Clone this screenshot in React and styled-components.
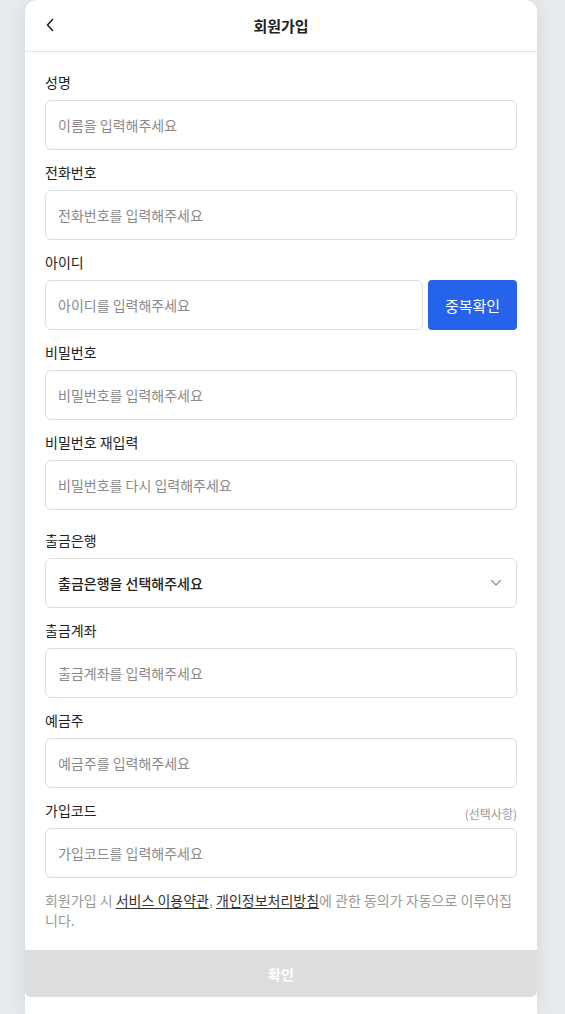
import styled, { createGlobalStyle } from "styled-components";

const GlobalStyle = createGlobalStyle`
  * { box-sizing: border-box; }
  body {
    margin: 0;
    background: #e9ecef;
    font-family: "Noto Sans CJK KR", "Noto Sans", sans-serif;
    color: #222;
  }
`;

const Card = styled.div`
  width: 512px;
  min-height: 1014px;
  margin-left: 25px;
  background: #fff;
  border-radius: 12px 12px 0 0;
  box-shadow: 0 0 24px rgba(0, 0, 0, 0.09);
  display: flex;
  flex-direction: column;
`;

const Header = styled.header`
  height: 52px;
  border-bottom: 1px solid #e3e3e3;
  display: flex;
  align-items: center;
  justify-content: center;
  position: relative;
`;

const BackButton = styled.button`
  position: absolute;
  left: 13px;
  top: 13px;
  width: 24px;
  height: 24px;
  padding: 0;
  border: 0;
  background: none;
  display: flex;
  align-items: center;
  justify-content: center;
`;

const Title = styled.h1`
  margin: 0;
  font-size: 15px;
  font-weight: 700;
  color: #222;
`;

const Form = styled.form`
  padding: 20px 20px 0;
  display: flex;
  flex-direction: column;
`;

const Field = styled.div`
  display: flex;
  flex-direction: column;
  gap: 8px;
  margin-top: ${(p) => (p.$spaced ? "8px" : "0")};
  margin-bottom: 12px;
`;

const LabelRow = styled.div`
  display: flex;
  justify-content: space-between;
  align-items: center;
  height: 20px;
`;

const Label = styled.label`
  font-size: 14px;
  font-weight: 400;
  line-height: 20px;
  color: #222;
`;

const Optional = styled.span`
  font-size: 12px;
  color: #999;
  margin-top: 6px;
`;

const Input = styled.input`
  width: 100%;
  height: 50px;
  border: 1px solid #dcdcdc;
  border-radius: 6px;
  padding: 0 12px;
  font-family: inherit;
  font-size: 14px;
  color: #222;
  outline: none;
  &::placeholder {
    color: #8a8a8a;
  }
`;

const Row = styled.div`
  display: flex;
  gap: 5px;
`;

const CheckButton = styled.button`
  flex: 0 0 89px;
  height: 50px;
  border: 0;
  border-radius: 4px;
  background: #2563eb;
  color: #fff;
  font-family: inherit;
  font-size: 15px;
  font-weight: 400;
`;

const Select = styled.div`
  height: 50px;
  border: 1px solid #dcdcdc;
  border-radius: 6px;
  padding: 0 14px 0 12px;
  display: flex;
  align-items: center;
  justify-content: space-between;
  font-size: 14px;
  font-weight: 500;
  color: #222;
`;

const Notice = styled.p`
  margin: 0;
  font-size: 14px;
  line-height: 20px;
  color: #999;
`;

const NoticeLink = styled.a`
  color: #333;
  text-decoration: underline;
  text-underline-offset: 2px;
`;

const Submit = styled.button`
  margin-top: 20px;
  height: 47px;
  width: 100%;
  border: 0;
  border-radius: 0 0 6px 6px;
  background: #dddddd;
  color: #fff;
  font-family: inherit;
  font-size: 14px;
  font-weight: 700;
`;

const fields = [
  { label: "성명", placeholder: "이름을 입력해주세요" },
  { label: "전화번호", placeholder: "전화번호를 입력해주세요" },
];

function TextField({ label, placeholder, optional, type = "text" }) {
  return (
    <Field>
      <LabelRow>
        <Label>{label}</Label>
        {optional && <Optional>(선택사항)</Optional>}
      </LabelRow>
      <Input type={type} placeholder={placeholder} />
    </Field>
  );
}

export default function App() {
  return (
    <>
      <GlobalStyle />
      <Card>
        <Header>
          <BackButton type="button" aria-label="뒤로">
            <svg width="10" height="14" viewBox="0 0 10 14" fill="none">
              <path d="M7.5 1.5L2.5 7l5 5.5" stroke="#222" strokeWidth="1.6" strokeLinecap="round" strokeLinejoin="round" />
            </svg>
          </BackButton>
          <Title>회원가입</Title>
        </Header>
        <Form onSubmit={(e) => e.preventDefault()}>
          {fields.map((f) => (
            <TextField key={f.label} {...f} />
          ))}
          <Field>
            <LabelRow>
              <Label>아이디</Label>
            </LabelRow>
            <Row>
              <Input placeholder="아이디를 입력해주세요" />
              <CheckButton type="button">중복확인</CheckButton>
            </Row>
          </Field>
          <TextField label="비밀번호" type="password" placeholder="비밀번호를 입력해주세요" />
          <TextField label="비밀번호 재입력" type="password" placeholder="비밀번호를 다시 입력해주세요" />
          <Field $spaced>
            <LabelRow>
              <Label>출금은행</Label>
            </LabelRow>
            <Select>
              출금은행을 선택해주세요
              <svg width="12" height="8" viewBox="0 0 12 8" fill="none">
                <path d="M1.5 1.5L6 6l4.5-4.5" stroke="#999" strokeWidth="1.4" strokeLinecap="round" strokeLinejoin="round" />
              </svg>
            </Select>
          </Field>
          <TextField label="출금계좌" placeholder="출금계좌를 입력해주세요" />
          <TextField label="예금주" placeholder="예금주를 입력해주세요" />
          <TextField label="가입코드" placeholder="가입코드를 입력해주세요" optional />
          <Notice>
            회원가입 시 <NoticeLink>서비스 이용약관</NoticeLink>,{" "}
            <NoticeLink>개인정보처리방침</NoticeLink>에 관한 동의가 자동으로 이루어집니다.
          </Notice>
        </Form>
        <Submit type="button">확인</Submit>
      </Card>
    </>
  );
}
